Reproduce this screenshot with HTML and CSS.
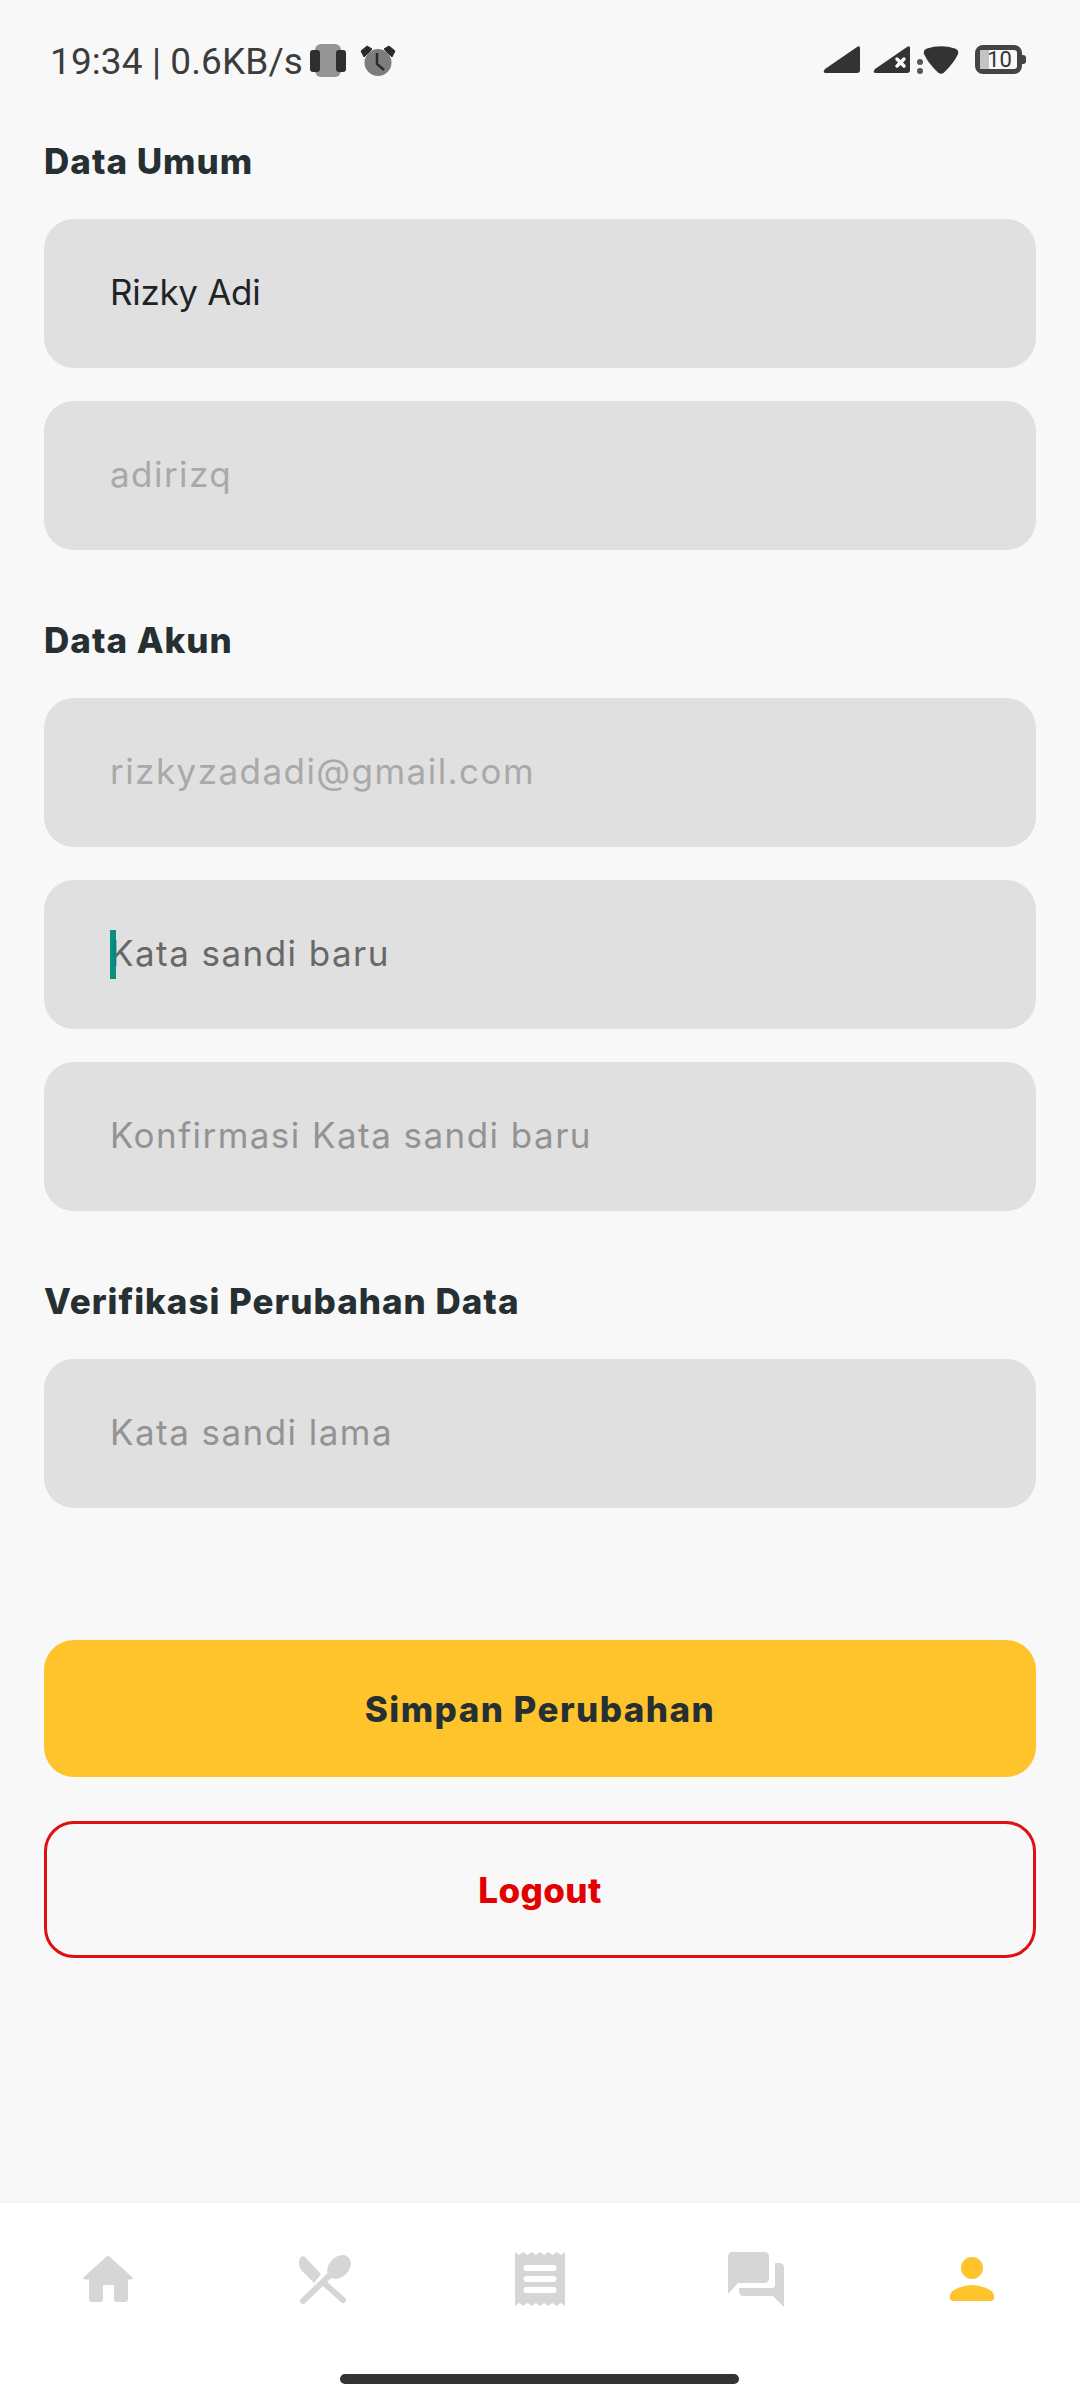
FILE: index.html
```html
<!DOCTYPE html>
<html lang="id">
<head>
<meta charset="UTF-8">
<meta name="viewport" content="width=device-width, initial-scale=1.0">
<title>Profil</title>
<link rel="stylesheet" href="styles.css">
</head>
<body>
<div class="status-bar">
  <div class="status-left">
    <span class="status-text">19:34 | 0.6KB/s</span>
    <svg class="icon-soft" width="36" height="33" viewBox="0 0 36 33">
      <rect x="5" y="0" width="26" height="33" rx="6" fill="#959595"/>
      <rect x="0" y="6" width="10" height="22" rx="3" fill="#2f2f2f"/>
      <rect x="26" y="6" width="10" height="22" rx="3" fill="#2f2f2f"/>
    </svg>
    <svg class="icon-alarm icon-soft" width="36" height="31" viewBox="0 0 36 31">
      <circle cx="18" cy="17.500" r="13.500" fill="#7d7d7d"/>
      <path d="M1 6l6-5 5 3-8 8zM35 6l-6-5-5 3 8 8z" fill="#2a2a2a" stroke="#2a2a2a" stroke-linejoin="round"/>
      <path d="M17 8v11l7 6" fill="none" stroke="#2a2a2a" stroke-width="2.500"/>
    </svg>
  </div>
  <div class="status-right">
    <svg width="38" height="29" viewBox="0 0 38 29">
      <path d="M3 28h31q3 0 3-3V3q0-3-3-1L2 24q-3 4 1 4z" fill="#333"/>
    </svg>
    <svg class="icon-signal2" width="50" height="29" viewBox="0 0 50 29">
      <path d="M3 28h31q3 0 3-3V3q0-3-3-1L2 24q-3 4 1 4z" fill="#333"/>
      <path d="M24 14l7 7M31 14l-7 7" stroke="#f8f8f8" stroke-width="3.500" stroke-linecap="round"/>
      <circle cx="47" cy="17" r="3" fill="#555"/>
      <circle cx="47" cy="26" r="3" fill="#555"/>
    </svg>
    <svg class="icon-wifi" width="36" height="28" viewBox="0 0 36 28">
      <path d="M1 8Q0 4 4 2.500 18-2 32 2.500 36 4 35 8 31 17 21 26.500q-3 2.500-6 0Q5 17 1 8z" fill="#333"/>
    </svg>
    <div class="battery"><span class="battery-level"></span><span class="battery-text">10</span></div>
  </div>
</div>

<div class="content">
  <section class="group">
    <h2 class="group-title">Data Umum</h2>
    <div class="field field-value">Rizky Adi</div>
    <div class="field field-disabled">adirizq</div>
  </section>

  <section class="group">
    <h2 class="group-title">Data Akun</h2>
    <div class="field field-disabled">rizkyzadadi@gmail.com</div>
    <div class="field field-focus"><span class="caret"></span>Kata sandi baru</div>
    <div class="field field-hint">Konfirmasi Kata sandi baru</div>
  </section>

  <section class="group">
    <h2 class="group-title">Verifikasi Perubahan Data</h2>
    <div class="field field-hint">Kata sandi lama</div>
  </section>

  <div class="actions">
    <button class="btn btn-save">Simpan Perubahan</button>
    <button class="btn btn-logout">Logout</button>
  </div>
</div>

<nav class="bottom-nav">
  <div class="nav-items">
    <div class="nav-item">
      <svg width="50" height="46" viewBox="0 0 50 46">
        <path d="M23 1q2-2 4 0L49 21q2 2.500-1 2.500h-3V43q0 3-3 3h-8q-3 0-3-3V29H20v14q0 3-3 3H9q-3 0-3-3V23.500H2q-3 0-1-2.500z" fill="#d6d6d6"/>
      </svg>
    </div>
    <div class="nav-item">
      <svg width="53" height="49" viewBox="0 0 53 49">
        <path d="M2 3q2-3 5-1L23 19l-7 9L4 16Q-1 11 2 3z" fill="#d6d6d6"/>
        <path d="M26 28l19 17" stroke="#d6d6d6" stroke-width="6" stroke-linecap="round"/>
        <path d="M32 20L5 46" stroke="#d6d6d6" stroke-width="6" stroke-linecap="round"/>
        <ellipse cx="41" cy="12" rx="13.500" ry="10" transform="rotate(-45 41 12)" fill="#d6d6d6"/>
      </svg>
    </div>
    <div class="nav-item">
      <svg width="50" height="54" viewBox="0 0 50 54">
        <path d="M0 0l4.170 3 4.170-3 4.170 3 4.170-3 4.170 3 4.170-3 4.170 3 4.170-3 4.170 3 4.170-3 4.170 3L50 0v54l-4.170-3-4.170 3-4.170-3-4.170 3-4.170-3-4.170 3-4.170-3-4.170 3-4.170-3-4.170 3-4.170-3L0 54z" fill="#d6d6d6"/>
        <rect x="8.500" y="13" width="33" height="6" rx="3" fill="#fff"/>
        <rect x="8.500" y="24" width="33" height="6" rx="3" fill="#fff"/>
        <rect x="8.500" y="35" width="33" height="6" rx="3" fill="#fff"/>
      </svg>
    </div>
    <div class="nav-item">
      <svg width="56" height="55" viewBox="0 0 56 55">
        <path d="M5 0h31q5 0 5 5v21q0 5-5 5H10L0 42V5q0-5 5-5z" fill="#d6d6d6"/>
        <path d="M47 11h4q5 0 5 5v39L45 44H16q-5 0-5-5v-3h33q3 0 3-3z" fill="#d6d6d6"/>
      </svg>
    </div>
    <div class="nav-item">
      <svg width="44" height="44" viewBox="0 0 44 44">
        <circle cx="22" cy="11" r="11" fill="#ffc42c"/>
        <path d="M3 44q-3 0-3-3v-2q0-5 8-8 7-3 14-3t14 3q8 3 8 8v2q0 3-3 3z" fill="#ffc42c"/>
      </svg>
    </div>
  </div>
  <div class="home-bar"></div>
</nav>
</body>
</html>
```

FILE: styles.css
```css
* {
  box-sizing: border-box;
}
body {
  margin: 0;
  width: 1080px;
  height: 2400px;
  display: flex;
  flex-direction: column;
  background-color: #f8f8f8;
  font-family: Inter, "Open Sans", sans-serif;
  color: #263033;
}
.status-bar {
  height: 134px;
  padding: 43px 58px 0 50px;
  display: flex;
  justify-content: space-between;
  align-items: flex-start;
}
.status-left {
  display: flex;
  align-items: center;
  height: 34px;
}
.status-text {
  font-family: Roboto, sans-serif;
  font-size: 37px;
  letter-spacing: 0.1px;
  color: #3c3c3c;
  white-space: nowrap;
  width: 260px;
  padding-top: 3px;
}
.icon-soft {
  filter: blur(0.6px);
}
.icon-alarm {
  margin-left: 14px;
}
.status-right {
  display: flex;
  align-items: flex-start;
  height: 32px;
  padding-top: 2px;
  gap: 12px;
}
.icon-signal2 {
  margin-right: -12px;
}
.icon-wifi {
  margin-top: 1px;
}
.battery {
  position: relative;
  width: 47px;
  height: 29px;
  margin-left: 4px;
  border: 5px solid #444;
  border-radius: 8px;
  display: flex;
  align-items: center;
  justify-content: center;
}
.battery::after {
  content: "";
  position: absolute;
  right: -9px;
  top: 5px;
  width: 4px;
  height: 9px;
  background-color: #444;
  border-radius: 0 3px 3px 0;
}
.battery-level {
  position: absolute;
  left: 0;
  top: 0;
  bottom: 0;
  width: 9px;
  background-color: #c4c4c4;
}
.battery-text {
  position: relative;
  left: 1px;
  font-family: Roboto, sans-serif;
  font-size: 22px;
  line-height: 1;
  color: #333;
}
.content {
  flex: 1;
  padding: 0 44px;
}
.group {
  display: flex;
  flex-direction: column;
  gap: 33px;
  margin-bottom: 63px;
}
.group-title {
  margin: 0 0 -2px;
  font-size: 35px;
  line-height: 54px;
  font-weight: 800;
  letter-spacing: 1px;
}
.field {
  height: 149px;
  padding: 0 0 3px 66px;
  display: flex;
  align-items: center;
  position: relative;
  background-color: #e0e0e0;
  border-radius: 30px;
  font-size: 35px;
  letter-spacing: 1.45px;
}
.field-value {
  color: #1e2426;
  letter-spacing: -0.3px;
}
.field-disabled {
  color: #a9a9a9;
}
.field-focus {
  color: #686868;
}
.field-hint {
  color: #939393;
}
.caret {
  position: absolute;
  left: 66px;
  top: 50px;
  width: 6px;
  height: 49px;
  background-color: #00897b;
  opacity: 0.95;
}
.actions {
  display: flex;
  flex-direction: column;
  gap: 44px;
  margin-top: 132px;
}
.btn {
  height: 137px;
  width: 100%;
  border-radius: 30px;
  font-family: inherit;
  font-size: 35px;
  font-weight: 800;
}
.btn-save {
  border: none;
  background-color: #ffc42c;
  color: #263033;
  letter-spacing: 1.45px;
}
.btn-logout {
  border: 3px solid #dd1111;
  background-color: transparent;
  color: #e30000;
  letter-spacing: 0.4px;
}
.bottom-nav {
  height: 198px;
  background-color: #fff;
  border-top: 1px solid #f3f3f3;
  box-shadow: 0 -2px 6px rgba(0, 0, 0, 0.01);
  position: relative;
}
.nav-items {
  display: grid;
  grid-template-columns: repeat(5, 216px);
  padding-top: 46px;
  height: 110px;
}
.nav-item {
  display: flex;
  align-items: center;
  justify-content: center;
  height: 60px;
}
.home-bar {
  position: absolute;
  left: 340px;
  bottom: 16px;
  width: 399px;
  height: 10px;
  background-color: #333;
  border-radius: 5px;
}
```
